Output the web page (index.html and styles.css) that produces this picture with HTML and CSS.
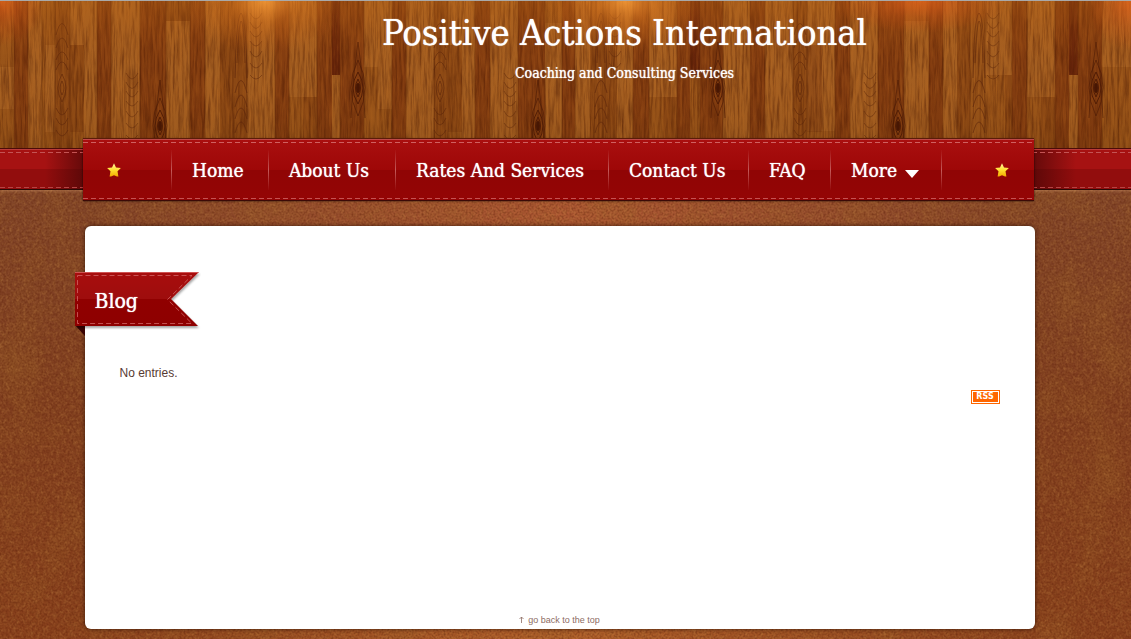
FILE: index.html
```html
<!DOCTYPE html>
<html lang="en">
<head>
<meta charset="utf-8">
<meta name="viewport" content="width=device-width, initial-scale=1">
<title>Blog - Positive Actions International</title>
<link rel="stylesheet" href="styles.css">
</head>
<body id="top">
<svg class="leather" aria-hidden="true" width="100%" height="100%">
  <defs>
    <filter id="hide" x="0" y="0" width="100%" height="100%" color-interpolation-filters="sRGB">
      <feTurbulence type="fractalNoise" baseFrequency="0.3 0.22" numOctaves="5" seed="8"/>
      <feColorMatrix values="0 0 0 0 0.72  0 0 0 0 0.48  0 0 0 0 0.24  1.6 0 0 0 -0.6"/>
    </filter>
    <filter id="hide-dark" x="0" y="0" width="100%" height="100%" color-interpolation-filters="sRGB">
      <feTurbulence type="fractalNoise" baseFrequency="0.5" numOctaves="4" seed="21"/>
      <feColorMatrix values="0 0 0 0 0.36  0 0 0 0 0.12  0 0 0 0 0.03  1.6 0 0 0 -0.6"/>
    </filter>
    <filter id="mottle" x="0" y="0" width="100%" height="100%" color-interpolation-filters="sRGB">
      <feTurbulence type="fractalNoise" baseFrequency="0.025 0.018" numOctaves="3" seed="3"/>
      <feColorMatrix values="0 0 0 0 0.62  0 0 0 0 0.4  0 0 0 0 0.16  1.6 0 0 0 -0.7"/>
    </filter>
  </defs>
  <rect width="100%" height="100%" filter="url(#mottle)" opacity=".5"/>
  <rect width="100%" height="100%" filter="url(#hide)" opacity=".5"/>
  <rect width="100%" height="100%" filter="url(#hide-dark)" opacity=".6"/>
</svg>

<header class="header">
  <svg class="wood" aria-hidden="true" viewBox="0 0 1131 148" preserveAspectRatio="xMidYMin slice">
    <defs>
      <filter id="grain" x="0" y="0" width="100%" height="100%" color-interpolation-filters="sRGB">
        <feTurbulence type="fractalNoise" baseFrequency="0.45 0.03" numOctaves="4" seed="5"/>
        <feColorMatrix values="0 0 0 0 0.3  0 0 0 0 0.1  0 0 0 0 0.01  1.8 0 0 0 -0.7"/>
      </filter>
      <filter id="grain-light" x="0" y="0" width="100%" height="100%" color-interpolation-filters="sRGB">
        <feTurbulence type="fractalNoise" baseFrequency="0.35 0.04" numOctaves="3" seed="31"/>
        <feColorMatrix values="0 0 0 0 0.78  0 0 0 0 0.45  0 0 0 0 0.14  1.8 0 0 0 -0.75"/>
      </filter>
      <radialGradient id="lamp"><stop offset="0" stop-color="#ffa23c" stop-opacity=".75"/><stop offset=".4" stop-color="#f08424" stop-opacity=".34"/><stop offset="1" stop-color="#d86a18" stop-opacity="0"/></radialGradient>
      <radialGradient id="ember"><stop offset="0" stop-color="#f4661c" stop-opacity=".6"/><stop offset=".5" stop-color="#e4581a" stop-opacity=".25"/><stop offset="1" stop-color="#d84a10" stop-opacity="0"/></radialGradient>
      <linearGradient id="fade" x2="0" y2="1"><stop offset="0" stop-color="#d07014" stop-opacity=".26"/><stop offset=".45" stop-color="#a04c10" stop-opacity="0"/><stop offset="1" stop-color="#401c00" stop-opacity=".12"/></linearGradient>
      <g id="knot" fill="none" stroke="#501c05" stroke-width="1">
        <path d="M0-9q-5 9 0 18q5-9 0-18zM0-16q-10 16 0 32q10-16 0-32z"/><path d="M0-28q-14 27 0 56q14-29 0-56zM0-3v7M-7 30Q-6-8 0-46Q6-8 7 30" opacity=".7"/><ellipse rx="2" ry="5" fill="#451503"/>
      </g>
      <g id="swirl" fill="none" stroke="#5e270a" stroke-width="1" opacity=".6">
        <path d="M0-7q-4 7 0 14q4-7 0-14zM0-14q-8 14 0 28q8-14 0-28zM-6-18Q0-34 6-18M-6-28Q0-44 6-28M-6-40Q0-60 6-40M-6-53Q0-76 6-53M-6 20Q0 34 6 20M-6 30Q0 44 6 30M-6 42Q0 54 6 42"/>
      </g>
      <g id="ripple" fill="none" stroke="#5e270a" stroke-width="1" opacity=".5">
        <path d="M-6 0Q0 12 6 0M-6 9Q0 22 6 9M-6 18Q0 30 6 18M-6 28Q0 38 6 28M-6 38Q0 50 6 38M-6 50Q0 60 6 50M-6 62Q0 70 6 62"/>
      </g>
      <g id="arch" fill="none" stroke="#5e270a" stroke-width="1" opacity=".65">
        <path d="M-6 65Q-5 4 0 0Q5 4 6 65M-4 50Q-2 10 0 8Q3 10 4 50M-6 80Q0 55 6 80M-6 94Q0 70 6 94M-6 106Q0 84 6 106M-6 120Q0 98 6 120"/>
      </g>
    </defs>
    <rect width="1131" height="148" fill="#985419"/>
    <path fill="#ab6826" opacity=".6" d="M0 66h14v42H0zM28 0h14v148H28zM45 44h10v87H45zM70 0h14v44H70zM84 0h13v148H84zM111 0h29v148h-29zM166 20h24v128h-24zM205 0h15v148h-15zM247 0h28v148h-28zM289 0h28v96h-28zM332 74h8v74h-8zM364 0h28v66h-28zM378 66h14v42h-14zM406 0h28v148h-28zM448 0h14v44h-14zM462 0h13v148h-13zM490 0h28v148h-28zM545 22h17v126h-17zM575 0h15v148h-15zM617 0h16v148h-16zM649 0h28v96h-28zM723 0h27v148h-27zM765 0h28v148h-28zM807 0h28v130h-28zM850 0h28v148h-28zM904 20h25v128h-25zM943 0h14v148h-14zM985 0h27v74h-27zM1027 0h28v96h-28zM1069 74h9v74h-9zM1102 0h29v66h-29z"/>
    <path fill="#7a330d" opacity=".72" d="M14 0h14v148H14zM97 0h14v148H97zM140 0h26v148h-26zM190 0h15v148h-15zM275 0h14v148h-14zM317 0h15v148h-15zM340 0h24v148h-24zM392 0h14v148h-14zM475 0h15v148h-15zM518 0h27v148h-27zM562 0h13v148h-13zM633 0h16v148h-16zM677 0h13v148h-13zM700 0h23v148h-23zM750 0h15v148h-15zM835 0h15v148h-15zM878 0h26v148h-26zM929 0h14v148h-14zM1012 0h15v148h-15zM1055 0h14v148h-14zM1078 0h24v148h-24z"/>
    <path fill="#7c3a10" opacity=".45" d="M55 0h15v148H55zM70 44h14v87H70zM220 0h27v148h-27zM166 0h24v20h-24zM303 96h14v52h-14zM434 0h14v148h-14zM448 44h14v87h-14zM590 0h27v148h-27zM663 96h14v52h-14zM793 0h14v148h-14zM807 44h15v87h-15zM957 0h13v148h-13zM1005 74h7v74h-7zM1041 96h14v52h-14z"/>
    <path fill="#66240a" d="M332 0h8v74h-8zM690 0h10v74h-10zM1069 0h9v74h-9z"/>
    <path fill="none" stroke="#5b280b" stroke-width="1" opacity=".45" d="M14 0v148M28 0v148M42 0v148M55 0v148M70 0v148M97 0v148M111 0v148M140 0v148M166 0v148M190 0v148M205 0v148M233 0v148M247 0v148M275 0v148M289 0v148M317 0v148M340 0v148M364 0v148M392 0v148M406 0v148M434 0v148M448 0v148M475 0v148M490 0v148M518 0v148M545 0v148M562 0v148M575 0v148M603 0v148M633 0v148M649 0v148M677 0v148M700 0v148M723 0v148M750 0v148M765 0v148M793 0v148M807 0v148M835 0v148M850 0v148M878 0v148M904 0v148M929 0v148M943 0v148M970 0v148M985 0v148M1012 0v148M1027 0v148M1055 0v148M1078 0v148M1102 0v148M1118 0v148"/>
    <rect width="1131" height="148" filter="url(#grain)" opacity=".62"/>
    <rect width="1131" height="148" filter="url(#grain-light)" opacity=".3"/>
    <use href="#knot" x="160" y="125"/><use href="#knot" x="538" y="125"/><use href="#knot" x="898" y="125"/>
    <use href="#knot" x="358" y="87"/><use href="#knot" x="718" y="87"/><use href="#knot" x="1096" y="87"/>
    <use href="#swirl" x="62" y="87"/><use href="#swirl" x="440" y="87"/><use href="#swirl" x="800" y="87"/>
    <use href="#ripple" x="256" y="12"/><use href="#ripple" x="615" y="12"/><use href="#ripple" x="993" y="12"/>
    <use href="#ripple" x="132" y="72"/><use href="#ripple" x="510" y="72"/><use href="#ripple" x="870" y="72"/>
    <use href="#arch" x="241" y="12"/><use href="#arch" x="601" y="12"/><use href="#arch" x="979" y="12"/>
    <rect width="1131" height="148" fill="url(#fade)"/>
    <ellipse cx="265" cy="0" rx="80" ry="52" fill="url(#lamp)"/>
    <ellipse cx="625" cy="0" rx="85" ry="52" fill="url(#lamp)"/>
    <ellipse cx="920" cy="0" rx="90" ry="32" fill="url(#ember)"/>
    <ellipse cx="0" cy="0" rx="45" ry="45" fill="url(#ember)"/>
    <ellipse cx="1131" cy="0" rx="45" ry="50" fill="url(#ember)"/>
  </svg>
  <div class="brand">
    <h1 class="brand-title">Positive Actions International</h1>
    <p class="brand-tagline">Coaching and Consulting Services</p>
  </div>
</header>

<div class="band">
  <nav class="nav" aria-label="Main">
    <svg class="star" viewBox="0 0 14 14" aria-hidden="true"><defs><linearGradient id="gold" x2="0" y2="1"><stop offset="0" stop-color="#fff6a0"/><stop offset=".5" stop-color="#ffe030"/><stop offset="1" stop-color="#f2ac00"/></linearGradient></defs><path fill="url(#gold)" d="M7 .2 9 4.600l4.900.5-3.400 3.200.9 5.200H10L7 12.200 4 13.500H2.600l.9-5.200L.1 5.100 5 4.600z"/></svg>
    <a class="nav-link" href="#home">Home</a>
    <a class="nav-link" href="#about">About Us</a>
    <a class="nav-link" href="#rates">Rates And Services</a>
    <a class="nav-link" href="#contact">Contact Us</a>
    <a class="nav-link" href="#faq">FAQ</a>
    <a class="nav-link" href="#more">More <svg class="caret" viewBox="0 0 14 8" aria-hidden="true"><path fill="#fff" d="M0 0h14L7 8z"/></svg></a>
    <span class="nav-end"><svg class="star" viewBox="0 0 14 14" aria-hidden="true"><path fill="url(#gold)" d="M7 .2 9 4.600l4.900.5-3.400 3.200.9 5.200H10L7 12.200 4 13.500H2.600l.9-5.200L.1 5.100 5 4.600z"/></svg></span>
  </nav>
</div>

<main class="card">
  <h2 class="flag">
    <svg class="flag-shape" viewBox="0 0 126 66" aria-hidden="true">
      <defs>
        <linearGradient id="cloth" x2="0" y2="1"><stop offset="0" stop-color="#a80f0f"/><stop offset=".5" stop-color="#9e0808"/><stop offset=".5" stop-color="#900606"/><stop offset="1" stop-color="#8e0404"/></linearGradient>
        <filter id="soft" x="-5%" y="-5%" width="110%" height="120%"><feDropShadow dx="1" dy="2" stdDeviation="1" flood-opacity=".35"/></filter>
      </defs>
      <path fill="#3a0303" d="M0 53h10v11z"/>
      <path fill="url(#cloth)" filter="url(#soft)" d="M0 0h124L96 27l27 27H0z"/>
      <path stroke="#cf5252" d="M0 .5h123"/>
      <path fill="none" stroke="#d66a6a" stroke-dasharray="5 3" opacity=".75" d="M2.500 3.500H117L92.500 27.500 117 51.500H2.500z"/>
    </svg>
    <span class="flag-text">Blog</span>
  </h2>
  <p class="empty">No entries.</p>
  <a class="rss" href="#rss" aria-label="RSS feed">RSS</a>
  <footer class="foot"><a class="to-top" href="#top"><svg class="up" viewBox="0 0 5 7" aria-hidden="true"><path fill="none" stroke="currentColor" stroke-width=".8" d="M2.500 7V1M.5 3l2-2 2 2"/></svg>go back to the top</a></footer>
</main>
</body>
</html>
```
FILE: styles.css
```css
* { box-sizing: border-box; }

body {
  position: relative;
  display: flex;
  flex-direction: column;
  min-height: 100vh;
  margin: 0;
  padding-bottom: 10px;
  background:
    radial-gradient(ellipse 480px 120px at 50% 210px, #b05a34 0%, rgba(176, 90, 52, 0) 100%),
    radial-gradient(ellipse 520px 60px at 50% 100%, #b5632c 0%, rgba(181, 99, 44, 0) 100%),
    linear-gradient(#82462a 190px, #824020 400px, #88401c 100%);
  font-family: "Liberation Sans", Arial, sans-serif;
  color: #573a32;
}

.leather {
  position: absolute;
  inset: 0;
  z-index: -1;
}

.header {
  position: relative;
  height: 148px;
  overflow: hidden;
  border-top: 1px solid #a9a9a9;
}

.wood {
  position: absolute;
  inset: 0;
  width: 100%;
  height: 100%;
}

.brand {
  position: relative;
  padding: 12px 0 0 118px;
  color: #fff;
  text-align: center;
  text-shadow: 0 0 1px #fff;
  font-family: "DejaVu Serif Condensed", "DejaVu Serif", serif;
}

.brand-title {
  margin: 0;
  font-size: 36px;
  font-weight: 400;
  line-height: 40px;
}

.brand-tagline {
  margin: 10px 0 0;
  font-size: 14px;
  line-height: 20px;
}

.band {
  display: flex;
  justify-content: center;
  height: 42px;
  padding-right: 14px;
  background:
    repeating-linear-gradient(90deg, #c45454 0 5px, transparent 5px 8px) 0 3px / 100% 1px no-repeat,
    repeating-linear-gradient(90deg, #b44444 0 5px, transparent 5px 8px) 0 38px / 100% 1px no-repeat,
    linear-gradient(90deg, transparent 45px, rgba(60, 5, 5, .6) 83px, rgba(60, 5, 5, .6) calc(100% - 97px), transparent calc(100% - 55px)),
    linear-gradient(#a61212 0 50%, #920d0d 50% 100%);
  border-top: 1px solid #4a0c08;
  border-bottom: 1px solid #2a0a06;
  box-shadow: inset 0 1px #bb3a3a, 0 1px 3px rgba(255, 200, 150, .35);
}

.nav {
  position: relative;
  display: grid;
  grid-template-columns: 88px 97px 127px 213px 140px 82px 111px 1fr;
  align-items: center;
  width: 951px;
  height: 62px;
  margin-top: -10px;
  background:
    repeating-linear-gradient(90deg, #d06060 0 5px, transparent 5px 8px) 0 2px / 100% 1px no-repeat,
    repeating-linear-gradient(90deg, #c65252 0 5px, transparent 5px 8px) 0 58px / 100% 1px no-repeat,
    linear-gradient(#a90f0f 0, #9e0707 50%, #900505 50%, #940505 100%);
  border-top: 1px solid #c04848;
  border-bottom: 1px solid #3a0a06;
  box-shadow: 0 -1px #5a1c08, 0 0 2px rgba(0, 0, 0, .7);
}

.star {
  width: 14px;
  height: 14px;
  margin-left: 24px;
}

.nav-link,
.nav-end {
  display: flex;
  align-items: center;
  height: 40px;
  border-left: 1px solid;
  border-image: linear-gradient(transparent, #c45a5a 50%, transparent) 1;
}

.nav-link {
  gap: 8px;
  padding-left: 20px;
  color: #fff;
  font-family: "DejaVu Serif Condensed", "DejaVu Serif", serif;
  font-size: 19px;
  line-height: 24px;
  text-decoration: none;
  text-shadow: 0 0 1px #fff;
  white-space: nowrap;
}

.caret {
  width: 14px;
  height: 8px;
  margin-top: 8px;
}

.nav-end {
  justify-content: flex-end;
  padding-right: 25px;
}

.card {
  display: flex;
  flex: 1;
  flex-direction: column;
  width: 950px;
  max-width: 100%;
  margin: 36px calc(50% - 469px) 0 auto;
  padding: 46px 35px 3px;
  background: #fff;
  border-radius: 6px;
  box-shadow: 0 0 4px rgba(30, 8, 0, .7);
}

.flag {
  display: grid;
  width: 126px;
  margin: 0 0 0 -45px;
  font-weight: 400;
}

.flag-shape,
.flag-text {
  grid-area: 1 / 1;
}

.flag-shape {
  width: 126px;
  height: 66px;
}

.flag-text {
  z-index: 1;
  padding: 15px 0 0 20px;
  color: #fff;
  font-family: "DejaVu Serif Condensed", "DejaVu Serif", serif;
  font-size: 21px;
  line-height: 28px;
  text-shadow: 0 0 1px #fff;
}

.empty {
  margin: 27px 0 0;
  font-size: 12px;
  line-height: 16px;
}

.rss {
  align-self: flex-end;
  width: 29px;
  height: 14px;
  margin-top: 9px;
  border: 1px solid #ff6600;
  outline: 1px solid #fff;
  outline-offset: -2px;
  background: #ff6600;
  color: #fff;
  font-family: "DejaVu Sans", sans-serif;
  font-size: 8px;
  font-weight: 700;
  line-height: 12px;
  text-align: center;
  text-decoration: none;
}

.foot {
  margin-top: auto;
  text-align: center;
  font-size: 9px;
  line-height: 12px;
}

.to-top {
  display: inline-flex;
  align-items: center;
  gap: 4px;
  color: #8d6c62;
  text-decoration: none;
}

.up {
  width: 5px;
  height: 7px;
}
```
